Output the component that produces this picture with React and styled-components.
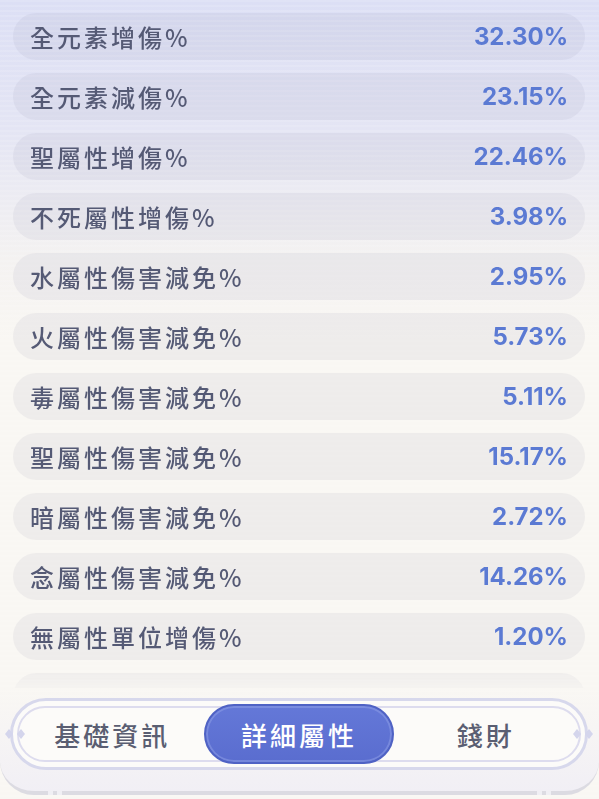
import React from 'react';
import styled, { createGlobalStyle } from 'styled-components';

const stats = [
  { label: '全元素增傷%', value: '32.30%' },
  { label: '全元素減傷%', value: '23.15%' },
  { label: '聖屬性增傷%', value: '22.46%' },
  { label: '不死屬性增傷%', value: '3.98%' },
  { label: '水屬性傷害減免%', value: '2.95%' },
  { label: '火屬性傷害減免%', value: '5.73%' },
  { label: '毒屬性傷害減免%', value: '5.11%' },
  { label: '聖屬性傷害減免%', value: '15.17%' },
  { label: '暗屬性傷害減免%', value: '2.72%' },
  { label: '念屬性傷害減免%', value: '14.26%' },
  { label: '無屬性單位增傷%', value: '1.20%' },
];

const tabs = ['基礎資訊', '詳細屬性', '錢財'];

const GlobalStyle = createGlobalStyle`
  html, body {
    margin: 0;
    padding: 0;
  }
  body {
    width: 599px;
    height: 799px;
    overflow: hidden;
    font-family: "Noto Sans CJK TC", "Noto Sans", sans-serif;
    background: linear-gradient(180deg, #dcdff5 0px, #e4e5f4 130px, #f4f2f1 260px, #f9f7f3 340px, #f9f7f3 100%);
  }
`;

const Screen = styled.div`
  width: 599px;
  height: 799px;
  display: flex;
  flex-direction: column;
  background-image: repeating-linear-gradient(
    180deg,
    rgba(255, 255, 255, 0.12) 0px,
    rgba(255, 255, 255, 0.12) 2px,
    rgba(0, 0, 0, 0) 2px,
    rgba(0, 0, 0, 0) 5px
  );
`;

const List = styled.div`
  height: 688px;
  overflow: hidden;
  padding: 13px 14px 0 13px;
  box-sizing: border-box;
  display: flex;
  flex-direction: column;
  gap: 13px;
  -webkit-mask-image: linear-gradient(180deg, #000 0px, #000 668px, rgba(0, 0, 0, 0.35) 688px);
  mask-image: linear-gradient(180deg, #000 0px, #000 668px, rgba(0, 0, 0, 0.35) 688px);
`;

const Row = styled.div`
  flex: 0 0 47px;
  border-radius: 24px;
  background: rgba(110, 110, 150, 0.075);
  display: flex;
  align-items: center;
  justify-content: space-between;
  padding: 0 17px 0 17px;
`;

const Label = styled.span`
  font-size: 24px;
  font-weight: 500;
  letter-spacing: 3px;
  color: #555a75;
  line-height: 1;
`;

const Value = styled.span`
  font-family: "Inter", "Noto Sans", sans-serif;
  font-size: 24px;
  font-weight: 700;
  color: #5b7ad3;
  line-height: 1;
`;

const TabSection = styled.div`
  flex: 1;
  position: relative;
  padding-top: 10px;
  box-sizing: border-box;
  background: linear-gradient(180deg, rgba(249, 247, 243, 0) 0px, #f7f5f4 40px, #f1eff5 100%);
  border-bottom: 4px solid #dcdbe2;
  border-bottom-left-radius: 34px;
  border-bottom-right-radius: 34px;
  margin-bottom: 4px;
`;

const Frame = styled.div`
  position: relative;
  margin-left: 10px;
  width: 578px;
  height: 72px;
  box-sizing: border-box;
  border: 3px solid #d7d8ec;
  border-radius: 36px;
  background: #fcfbf9;
  padding: 5px 4px;
`;

const InnerLine = styled.div`
  height: 100%;
  box-sizing: border-box;
  border: 2px solid #dddcee;
  border-radius: 28px;
  display: grid;
  grid-template-columns: repeat(3, 1fr);
  align-items: center;
`;

const Tab = styled.div`
  height: ${({ $active }) => ($active ? '60px' : '52px')};
  margin: ${({ $active }) => ($active ? '-5px -2px' : '0')};
  box-sizing: border-box;
  border-radius: 30px;
  display: flex;
  align-items: center;
  justify-content: center;
  font-size: 26px;
  font-weight: 500;
  letter-spacing: 3px;
  color: ${({ $active }) => ($active ? '#ffffff' : '#5a5e72')};
  background: ${({ $active }) =>
    $active ? 'linear-gradient(180deg, #6478d8 0%, #5a6dcf 100%)' : 'transparent'};
  border: ${({ $active }) => ($active ? '2px solid #4f62c4' : 'none')};
  box-shadow: ${({ $active }) =>
    $active ? 'inset 0 0 0 2px rgba(140, 156, 230, 0.55)' : 'none'};
`;

const Ornament = styled.svg`
  position: absolute;
  top: 50%;
  margin-top: -6px;
  ${({ $side }) => ($side === 'left' ? 'left: -9px;' : 'right: -9px;')}
`;

const Dots = styled.div`
  position: absolute;
  bottom: -4px;
  ${({ $side }) => ($side === 'left' ? 'left: 48px;' : 'right: 48px;')}
  display: flex;
  gap: 4px;
  span {
    width: 5px;
    height: 4px;
    background: #f0eff4;
  }
`;

const Diamonds = ({ side }) => (
  <Ornament $side={side} width="22" height="12" viewBox="0 0 22 12">
    <path d="M5 1 L9 6 L5 11 L1 6 Z" fill="#d4d5ec" />
    <path d="M17 1 L21 6 L17 11 L13 6 Z" fill="#d4d5ec" />
  </Ornament>
);

const App = () => (
  <>
    <GlobalStyle />
    <Screen>
      <List>
        {stats.map(s => (
          <Row key={s.label}>
            <Label>{s.label}</Label>
            <Value>{s.value}</Value>
          </Row>
        ))}
        <Row />
      </List>
      <TabSection>
        <Frame>
          <Diamonds side="left" />
          <Diamonds side="right" />
          <InnerLine>
            {tabs.map(t => (
              <Tab key={t} $active={t === '詳細屬性'}>
                {t}
              </Tab>
            ))}
          </InnerLine>
        </Frame>
        <Dots $side="left"><span /><span /></Dots>
        <Dots $side="right"><span /><span /></Dots>
      </TabSection>
    </Screen>
  </>
);

export default App;
